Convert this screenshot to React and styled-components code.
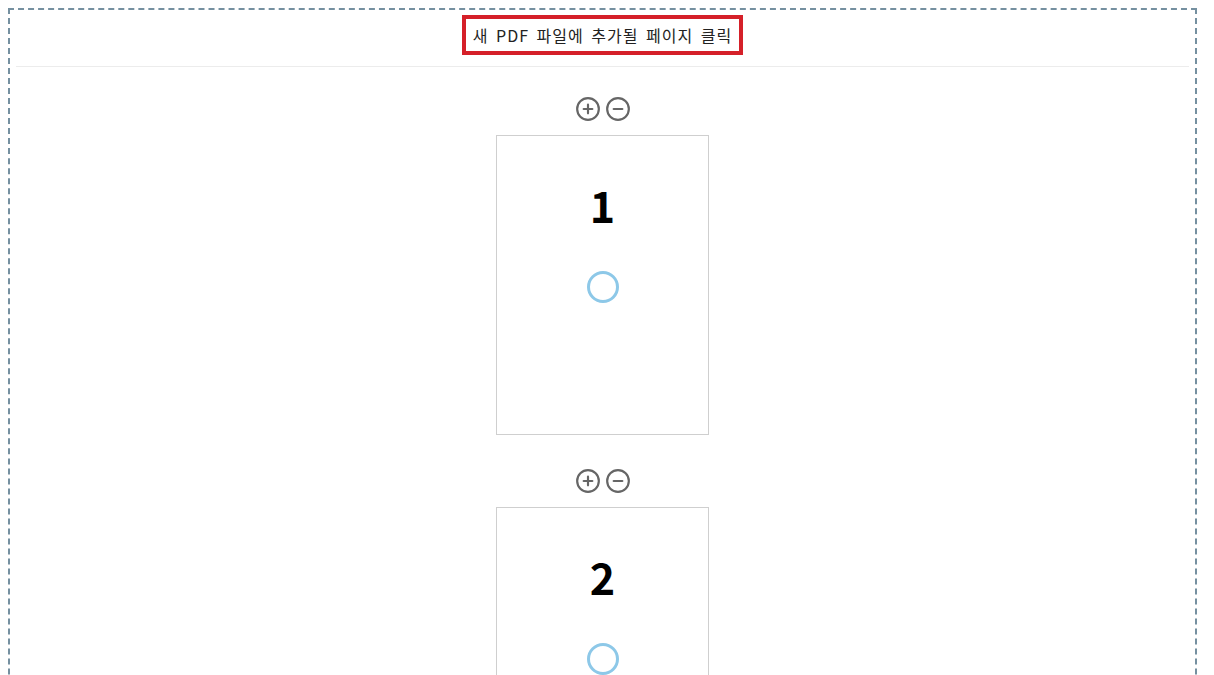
import React from 'react';
import styled, { createGlobalStyle } from 'styled-components';
import { CirclePlus, CircleMinus } from 'lucide-react';

const GlobalStyle = createGlobalStyle`
    body {
        margin: 8px;
        background: #fff;
        font-family: "Noto Sans CJK KR", "Noto Sans", sans-serif;
        color: #222;
    }
`;

const Frame = styled.div`
    margin-right: 9px;
    border: 2px dashed #7590a0;
    padding: 0 6px;
    min-height: 900px;
`;

const Header = styled.header`
    display: flex;
    justify-content: center;
    padding: 5px 0 11px;
    border-bottom: 1px solid #ececec;
`;

const Title = styled.h1`
    margin: 0;
    height: 32px;
    padding: 0 7px;
    border: 4px solid #d52029;
    font-size: 16px;
    font-weight: 400;
    line-height: 32px;
    color: #222;
    letter-spacing: 1px;
    word-spacing: 3px;
`;

const PageList = styled.div`
    display: flex;
    flex-direction: column;
    align-items: center;
    padding-top: 30px;
`;

const PageItem = styled.div`
    display: flex;
    flex-direction: column;
    align-items: center;
    margin-bottom: 34px;
`;

const Controls = styled.div`
    display: flex;
    gap: 4px;
    height: 24px;
    align-items: center;

    & svg {
        cursor: pointer;
    }
`;

const Card = styled.div`
    margin-top: 14px;
    width: 211px;
    height: 298px;
    border: 1px solid #cfcfcf;
    display: flex;
    flex-direction: column;
    align-items: center;
`;

const PageNum = styled.div`
    margin-top: 47px;
    font-size: 43px;
    font-weight: 700;
    line-height: 1;
    color: #000;
`;

const Spinner = styled.div`
    margin-top: 45px;
    width: 26px;
    height: 26px;
    border: 3px solid #8dc8e8;
    border-radius: 50%;
`;

const pages = [1, 2, 3];

const App = () => {
    return (
        <>
            <GlobalStyle />
            <Frame>
                <Header>
                    <Title>새 PDF 파일에 추가될 페이지 클릭</Title>
                </Header>
                <PageList>
                    {pages.map(n => (
                        <PageItem key={n}>
                            <Controls>
                                <CirclePlus size={26} color="#666" strokeWidth={2} />
                                <CircleMinus size={26} color="#666" strokeWidth={2} />
                            </Controls>
                            <Card>
                                <PageNum>{n}</PageNum>
                                <Spinner />
                            </Card>
                        </PageItem>
                    ))}
                </PageList>
            </Frame>
        </>
    );
};

export default App;
